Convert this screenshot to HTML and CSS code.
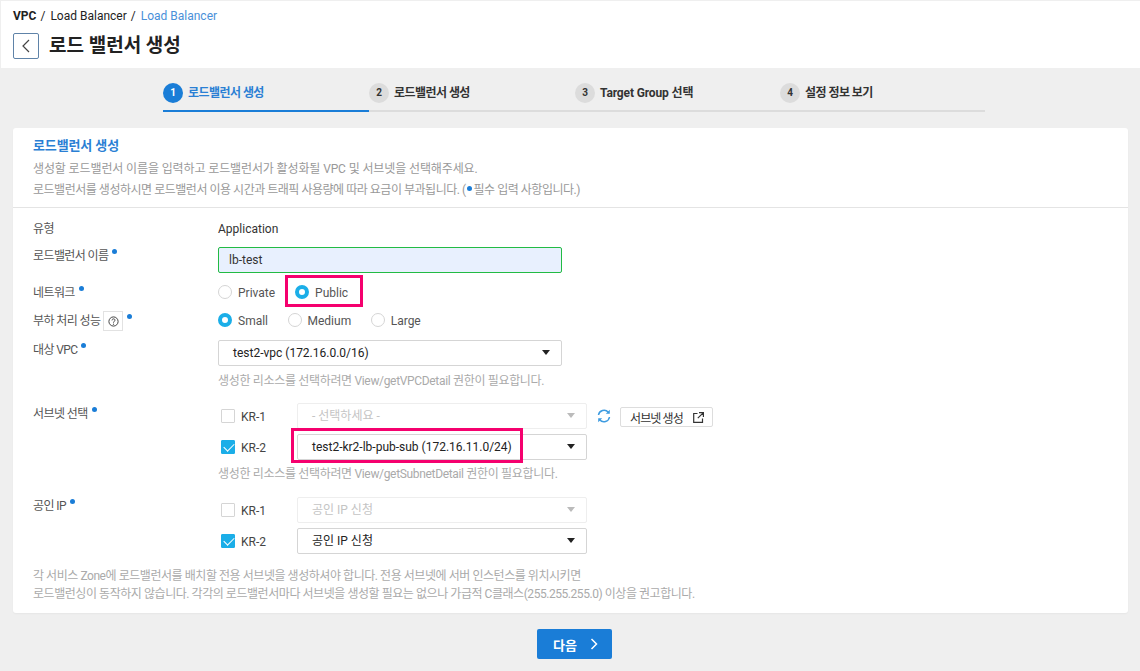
FILE: index.html
```html
<!DOCTYPE html>
<html lang="ko">

<head>
    <title>로드 밸런서 생성</title>
    <meta charset="utf-8">
    <link rel="stylesheet" href="styles.css">
</head>

<body>
    <header class="top">
        <div class="crumbs">
            <b>VPC</b><span class="sep">/</span><span>Load Balancer</span><span class="sep">/</span><span class="now">Load Balancer</span>
        </div>
        <div class="title-row">
            <button class="back" type="button">
                <svg width="8" height="14" viewBox="0 0 8 14"><path d="M7 1 1 7l6 6" fill="none" stroke="#444" stroke-width="1.2"/></svg>
            </button>
            <h1>로드 밸런서 생성</h1>
        </div>
    </header>

    <ol class="steps">
        <li class="step on"><i>1</i><span class="ko">로드밸런서 생성</span></li>
        <li class="step"><i>2</i><span class="ko">로드밸런서 생성</span></li>
        <li class="step mid"><i>3</i><span>Target Group 선택</span></li>
        <li class="step last"><i>4</i><span class="ko">설정 정보 보기</span></li>
    </ol>

    <main class="card">
        <div class="card-head">
            <h2>로드밸런서 생성</h2>
            <p>생성할 로드밸런서 이름을 입력하고 로드밸런서가 활성화될 VPC 및 서브넷을 선택해주세요.</p>
            <p class="long">로드밸런서를 생성하시면 로드밸런서 이용 시간과 트래픽 사용량에 따라 요금이 부과됩니다. (<em class="dot"></em>필수 입력 사항입니다.)</p>
        </div>

        <div class="form">
            <div class="row row-type">
                <div class="label">유형</div>
                <div class="value">Application</div>
            </div>

            <div class="row row-name">
                <div class="label">로드밸런서 이름<em class="dot"></em></div>
                <input class="text-input" type="text" value="lb-test">
            </div>

            <div class="row row-net">
                <div class="label">네트워크<em class="dot"></em></div>
                <div class="radios">
                    <label class="radio"><span class="mark"></span>Private</label>
                    <label class="radio picked"><span class="mark"></span>Public<span class="flag flag-radio"></span></label>
                </div>
            </div>

            <div class="row row-load">
                <div class="label">부하 처리 성능<span class="help">
                    <svg width="11" height="11" viewBox="0 0 11 11"><circle cx="5.5" cy="5.5" r="4.6" fill="none" stroke="#444"/><path d="M4 4.4c0-2 3-2 3-.2C7 5.300 5.500 5.200 5.500 6.700" fill="none" stroke="#444"/><circle cx="5.500" cy="8.200" r=".6" fill="#444"/></svg>
                </span><em class="dot"></em></div>
                <div class="radios tight">
                    <label class="radio picked"><span class="mark"></span>Small</label>
                    <label class="radio"><span class="mark"></span>Medium</label>
                    <label class="radio"><span class="mark"></span>Large</label>
                </div>
            </div>

            <div class="row row-vpc">
                <div class="label">대상 VPC<em class="dot"></em></div>
                <div class="col">
                    <div class="select wide">test2-vpc (172.16.0.0/16)</div>
                    <p class="hint">생성한 리소스를 선택하려면 View/getVPCDetail 권한이 필요합니다.</p>
                </div>
            </div>

            <div class="row row-subnet">
                <div class="label">서브넷 선택<em class="dot"></em></div>
                <div class="col">
                    <div class="zone">
                        <span class="check"></span><span class="zone-name">KR-1</span>
                        <div class="select off">- 선택하세요 -</div>
                        <svg class="refresh" width="14" height="14" viewBox="0 0 14 14"><path d="M1.500 6A5.600 5.600 0 0 1 11.300 3.200M12.500 8A5.600 5.600 0 0 1 2.700 10.800" fill="none" stroke="#3d9be0" stroke-width="1.500"/><path d="M12.800 .8v4h-4zM1.200 13.200v-4h4z" fill="#3d9be0"/></svg>
                        <button class="make" type="button"><span>서브넷 생성</span>
                            <svg width="11" height="11" viewBox="0 0 11 11"><path d="M4.500 1.500H.7v8.800h8.800V6.500M6 .6h4.400V5M10.200.8 4.800 6.200" fill="none" stroke="#333" stroke-width="1.200"/></svg>
                        </button>
                    </div>
                    <div class="zone">
                        <span class="check on"></span><span class="zone-name">KR-2</span>
                        <div class="select">test2-kr2-lb-pub-sub (172.16.11.0/24)<span class="flag flag-select"></span></div>
                    </div>
                    <p class="hint flush">생성한 리소스를 선택하려면 View/getSubnetDetail 권한이 필요합니다.</p>
                </div>
            </div>

            <div class="row row-ip">
                <div class="label">공인 IP<em class="dot"></em></div>
                <div class="col">
                    <div class="zone">
                        <span class="check"></span><span class="zone-name">KR-1</span>
                        <div class="select off">공인 IP 신청</div>
                    </div>
                    <div class="zone">
                        <span class="check on"></span><span class="zone-name">KR-2</span>
                        <div class="select">공인 IP 신청</div>
                    </div>
                </div>
            </div>

            <div class="note">
                <p>각 서비스 Zone에 로드밸런서를 배치할 전용 서브넷을 생성하셔야 합니다. 전용 서브넷에 서버 인스턴스를 위치시키면</p>
                <p>로드밸런싱이 동작하지 않습니다. 각각의 로드밸런서마다 서브넷을 생성할 필요는 없으나 가급적 C클래스(255.255.255.0) 이상을 권고합니다.</p>
            </div>
        </div>
    </main>

    <div class="actions">
        <button class="next" type="button">다음
            <svg width="8" height="12" viewBox="0 0 8 12"><path d="M1.500 1 6.500 6l-5 5" fill="none" stroke="#fff" stroke-width="1.500"/></svg>
        </button>
    </div>
</body>

</html>
```

FILE: styles.css
```css
* {
    box-sizing: border-box;
}

html,
body {
    height: 100%;
}

body {
    margin: 0;
    background-color: #efefef;
    font-family: Roboto, "Noto Sans CJK KR", sans-serif;
    font-size: 12px;
    color: #333;
    overflow: hidden;
}

p,
h1,
h2,
ol {
    margin: 0;
    padding: 0;
}

button {
    font-family: inherit;
    cursor: pointer;
}

/* header */
.top {
    height: 67px;
    margin: 1px 0 0 1px;
    padding: 7px 12px 0;
    background-color: #fff;
}

.crumbs {
    display: flex;
    height: 16px;
    line-height: 16px;
    color: #222;
}

.crumbs b {
    font-weight: 700;
}

.sep {
    margin: 0 5px 0 4px;
}

.crumbs .now {
    color: #4a90d9;
}

.title-row {
    display: flex;
    align-items: center;
    gap: 10px;
    margin-top: 9px;
}

.back {
    display: flex;
    align-items: center;
    justify-content: center;
    width: 26px;
    height: 26px;
    padding: 0;
    background: #fff;
    border: 1px solid #5f83a8;
    border-radius: 2px;
}

h1 {
    font-size: 19px;
    font-weight: 700;
    line-height: 26px;
    color: #222;
}

/* stepper */
.steps {
    display: flex;
    width: 822px;
    height: 44px;
    margin: 0 0 0 163px;
    list-style: none;
}

.step {
    display: flex;
    align-items: flex-start;
    gap: 5px;
    width: 206px;
    padding-top: 15px;
    border-bottom: 2px solid #dcdcdc;
    font-size: 12px;
    font-weight: 700;
    line-height: 20px;
    color: #333;
}

.step .ko {
    letter-spacing: -.55px;
}

.step.mid {
    width: 205px;
    letter-spacing: -.13px;
}

.step i {
    width: 20px;
    height: 20px;
    border-radius: 50%;
    background-color: #dcdcdc;
    font-size: 10px;
    font-style: normal;
    letter-spacing: 0;
    text-align: center;
}

.step.on {
    border-bottom-color: #1a7dd7;
    color: #2a7fd4;
}

.step.on i {
    background-color: #1a7dd7;
    color: #fff;
}

.step.last {
    width: 205px;
}

/* card */
.card {
    height: 485px;
    margin: 16px 12px 0 13px;
    background-color: #fff;
    border-radius: 3px;
    box-shadow: 0 1px 2px rgba(0, 0, 0, .04);
}

.card-head {
    height: 80px;
    padding: 9px 20px 0;
    border-bottom: 1px solid #e4e4e4;
    line-height: 21px;
    letter-spacing: -.12px;
    color: #999;
}

.card-head .long {
    letter-spacing: -.48px;
}

h2 {
    margin-bottom: 4px;
    font-size: 13px;
    font-weight: 700;
    line-height: 18px;
    color: #2a7fd4;
}

.dot {
    display: inline-block;
    width: 5px;
    height: 5px;
    margin: 0 1px 0 4px;
    border-radius: 50%;
    background-color: #1a7dd7;
    vertical-align: 6px;
}

.card-head .dot {
    margin: 0 2px 0 1px;
    vertical-align: 3px;
}

/* form rows */
.form {
    padding: 0 20px;
}

.row {
    display: flex;
    align-items: flex-start;
}

.label {
    flex: none;
    width: 185px;
    line-height: 16px;
    letter-spacing: -.6px;
    color: #555;
}

.value {
    line-height: 22px;
    color: #333;
}

.row-type {
    height: 30px;
    padding-top: 10px;
}

.row-type .label {
    padding-top: 3px;
}

.row-name {
    margin-top: 9px;
}

.row-name .label,
.row-ip .label {
    margin-top: 1px;
}

.row-net {
    margin-top: 9px;
}

.row-net .label,
.row-subnet .label {
    margin-top: 3px;
}

.row-load {
    height: 20px;
    margin-top: 8px;
}

.row-load .label {
    margin-top: 1px;
}

.row-vpc {
    margin-top: 10px;
}

.row-vpc .label {
    margin-top: 2px;
}

.row-subnet {
    margin-top: 15px;
}

.row-ip {
    margin-top: 16px;
}

.text-input {
    width: 344px;
    height: 26px;
    padding: 0 10px;
    background-color: #e8f0fe;
    border: 1px solid #22bb44;
    border-radius: 2px;
    font-family: inherit;
    font-size: 12px;
    color: #333;
}

.radios {
    display: flex;
    gap: 20px;
}

.radios.tight {
    gap: 19.5px;
}

.radio {
    position: relative;
    display: flex;
    align-items: flex-start;
    gap: 6px;
    height: 20px;
    line-height: 22px;
    color: #555;
}

.mark {
    width: 14px;
    height: 14px;
    margin-top: 3px;
    border: 1px solid #d5d5d5;
    border-radius: 50%;
    background-color: #fff;
}

.picked .mark {
    border: 4px solid #1baee8;
}

.help {
    display: inline-flex;
    align-items: center;
    justify-content: center;
    width: 20px;
    height: 20px;
    margin: 0 0 2px 3px;
    border: 1px solid #e2e2e2;
    vertical-align: middle;
}

.col {
    display: flex;
    flex-direction: column;
}

.select {
    position: relative;
    width: 290px;
    height: 26px;
    padding-left: 14px;
    border: 1px solid #d5d5d5;
    border-radius: 2px;
    line-height: 25px;
    color: #222;
}

.select::after {
    content: "";
    position: absolute;
    top: 9px;
    right: 11px;
    border-style: solid;
    border-width: 5px 4px 0;
    border-color: #222 transparent transparent;
}

.select.wide {
    width: 344px;
}

.select.off {
    border-color: #eee;
    color: #c4c4c4;
}

.select.off::after {
    border-top-color: #bbb;
}

.hint {
    height: 16px;
    margin-top: 6px;
    line-height: 18px;
    letter-spacing: -.33px;
    color: #aaa;
}

.hint.flush {
    margin-top: 0;
}

.zone {
    display: flex;
    align-items: center;
    height: 26px;
    margin-bottom: 5px;
}

.check {
    flex: none;
    width: 14px;
    height: 14px;
    margin-left: 3px;
    border: 1px solid #d5d5d5;
    border-radius: 1px;
}

.check.on {
    position: relative;
    background-color: #1baee8;
    border-color: #1baee8;
}

.check.on::after {
    content: "";
    position: absolute;
    top: 2px;
    left: 2px;
    width: 9px;
    height: 5px;
    border-left: 1.500px solid #fff;
    border-bottom: 1.500px solid #fff;
    transform: rotate(-45deg);
}

.zone-name {
    flex: none;
    width: 62px;
    padding: 2px 0 0 6px;
    color: #444;
}

.refresh {
    margin-left: 10px;
}

.make {
    display: flex;
    align-items: center;
    gap: 10px;
    height: 20px;
    margin: 2px 0 0 9px;
    padding: 0 9px;
    background: #fff;
    border: 1px solid #ddd;
    border-radius: 2px;
    font-size: 12px;
    color: #333;
}

.make span {
    letter-spacing: -.9px;
}

.make svg {
    margin-right: -1px;
}

/* pink boxes drawn over the screenshot */
.flag {
    position: absolute;
    border: 3px solid #f5006e;
    pointer-events: none;
}

.flag-radio {
    top: -7px;
    right: -15px;
    bottom: -5px;
    left: -10px;
}

.flag-select {
    top: -7px;
    right: 63px;
    bottom: -4px;
    left: -7px;
}

.note {
    margin-top: 8px;
    line-height: 18px;
    letter-spacing: -.45px;
    color: #aaa;
}

/* footer */
.actions {
    display: flex;
    justify-content: center;
    margin-top: 16px;
    padding-left: 9px;
}

.next {
    display: flex;
    align-items: center;
    gap: 13px;
    width: 75px;
    height: 30px;
    padding: 0 0 0 16px;
    background-color: #1a7dd7;
    border: none;
    border-radius: 2px;
    font-size: 13px;
    font-weight: 700;
    color: #fff;
}
```
